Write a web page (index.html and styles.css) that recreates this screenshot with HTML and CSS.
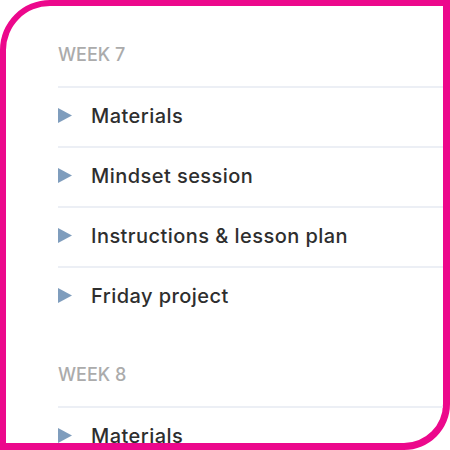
FILE: index.html
```html
<!DOCTYPE html>
<html lang="en">
<head>
    <meta charset="UTF-8">
    <meta name="viewport" content="width=device-width, initial-scale=1.0">
    <title>Weekly plan</title>
    <link rel="stylesheet" href="styles.css">
</head>
<body>

<div class="frame">
    <div class="week">
        <div class="week-title">WEEK 7</div>
        <div class="item"><svg class="arrow" viewBox="0 0 14 15"><polygon points="0,0 14,7.5 0,15"/></svg><span>Materials</span></div>
        <div class="item"><svg class="arrow" viewBox="0 0 14 15"><polygon points="0,0 14,7.5 0,15"/></svg><span>Mindset session</span></div>
        <div class="item"><svg class="arrow" viewBox="0 0 14 15"><polygon points="0,0 14,7.5 0,15"/></svg><span>Instructions &amp; lesson plan</span></div>
        <div class="item"><svg class="arrow" viewBox="0 0 14 15"><polygon points="0,0 14,7.5 0,15"/></svg><span>Friday project</span></div>
    </div>

    <div class="week">
        <div class="week-title">WEEK 8</div>
        <div class="item"><svg class="arrow" viewBox="0 0 14 15"><polygon points="0,0 14,7.5 0,15"/></svg><span>Materials</span></div>
        <div class="item"><svg class="arrow" viewBox="0 0 14 15"><polygon points="0,0 14,7.5 0,15"/></svg><span>Mindset session</span></div>
    </div>
</div>

</body>
</html>
```

FILE: styles.css
```css
/* Page */
body {
    margin: 0;
    background: #fff;
    font-family: Inter, "Noto Sans", sans-serif;
}

/* Pink rounded frame around the list */
.frame {
    box-sizing: border-box;
    width: 450px;
    height: 450px;
    border: 6px solid #ec088c;
    border-right-width: 7px;
    border-bottom-width: 7px;
    border-radius: 50px 0 46px 0;
    padding-left: 52px;
    overflow: hidden;
    background: #fff;
}

.week-title {
    padding-top: 34px;
    margin-bottom: 16px;
    line-height: 30px;
    font-size: 18px;
    font-weight: 500;
    color: #ababab;
}

.item {
    display: flex;
    align-items: center;
    gap: 19px;
    height: 55px;
    padding-bottom: 3px;
    border-top: 2px solid #eceff5;
    font-size: 20px;
    letter-spacing: 0.45px;
    font-weight: 500;
    color: #2e2e2e;
}

.arrow {
    width: 14px;
    height: 15px;
    fill: #7f9dbd;
    flex-shrink: 0;
}
```
